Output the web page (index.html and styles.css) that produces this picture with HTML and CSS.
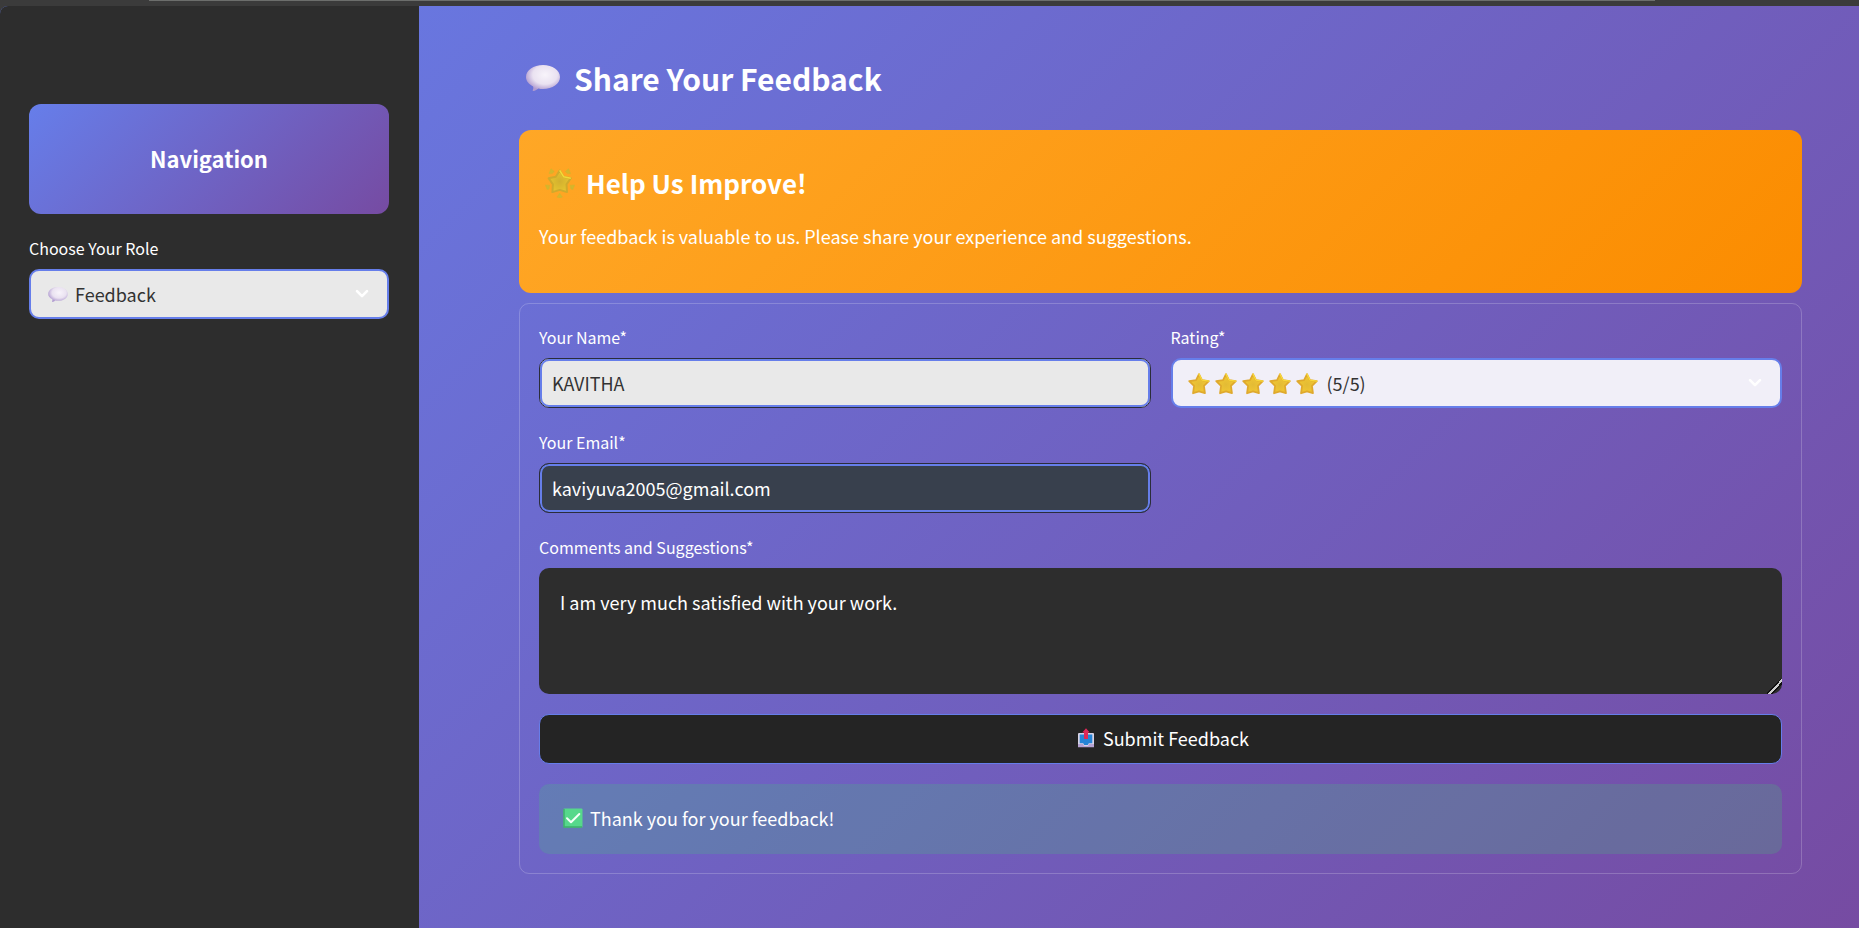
FILE: index.html
```html
<!DOCTYPE html>
<html lang="en">
<head>
<meta charset="utf-8">
<meta name="viewport" content="width=device-width, initial-scale=1">
<title>Share Your Feedback</title>
<link rel="stylesheet" href="styles.css">
</head>
<body>
<svg class="defs" aria-hidden="true">
  <defs>
    <radialGradient id="bubbleFill" cx="56%" cy="38%" r="60%">
      <stop offset="0" stop-color="#f8f4fb"/><stop offset=".6" stop-color="#eae2f1"/><stop offset="1" stop-color="#b09bd0"/>
    </radialGradient>
    <radialGradient id="starFill" cx="50%" cy="55%" r="60%">
      <stop offset="0" stop-color="#e3bb35"/><stop offset=".6" stop-color="#eec433"/><stop offset="1" stop-color="#e0a52e"/>
    </radialGradient>
    <radialGradient id="glowFill" cx="50%" cy="50%" r="60%">
      <stop offset="0" stop-color="#d3b02f"/><stop offset="1" stop-color="#e8c82f"/>
    </radialGradient>
    <symbol id="bubble" viewBox="0 0 34 26">
      <path d="M17 0C26.500 0 34 5.300 34 12S26.500 24 17 24c-1.700 0-3.200-.1-4.600-.5-1.300 1.200-3 2.200-5.300 2.500-.6-.2-.5-.8-.2-1.300.5-1 .5-2.200.2-3.300C2.700 19.200 0 16 0 12 0 5.300 7.500 0 17 0z" fill="url(#bubbleFill)"/>
    </symbol>
    <symbol id="star" viewBox="0 0 20 20">
      <path d="M10 1l2.700 5.400 6.200.9-4.400 4.400.9 6.700-5.400-1.700-5.400 1.700.9-6.700L1.100 7.300l6.200-.9z" fill="url(#starFill)" stroke="#dfa92d" stroke-width="1.600" stroke-linejoin="round"/>
      <path d="M10 1l2.700 5.400 6.200.9" fill="none" stroke="#f8da3c" stroke-width="1.200" stroke-linecap="round" stroke-linejoin="round"/>
    </symbol>
    <symbol id="glow" viewBox="0 0 30 30">
      <path d="M14.700 2.500l3.900 6.200 7.200 1.500-4.300 6.100.5 7.800-7.300-2.200-7.300 2.200.5-7.800-4.300-6.100 7.200-1.500z" fill="url(#glowFill)" stroke="#cfaa2c" stroke-width="2" stroke-linejoin="round"/>
      <path d="M14.700 2.300l3.900 6.400 7.200 1.500" fill="none" stroke="#f2da38" stroke-width="1.600" stroke-linejoin="round"/>
      <path d="M6 .8l3.200 2.600-2 2.200-3.200 0zM23.500.8l-3.200 2.600 2 2.200 3.200 0zM.4 17l4.200.4-.6 3.600-1.800.4zM29.600 17l-4.600.4 1 3.600 1.800.4zM14.700 25.200l2.600 3.900-2.600.8-2.600-.8z" fill="#d4b62c" stroke="#d4b62c" stroke-width=".6" stroke-linejoin="round"/>
    </symbol>
    <symbol id="outbox" viewBox="0 0 18 20">
      <path d="M2 5h14a1 1 0 0 1 1 1v13H1V6a1 1 0 0 1 1-1z" fill="#d9d3e6"/>
      <path d="M1 16h5l1 2h4l1-2h5v3.300H1z" fill="#b6a3d3"/>
      <path d="M2.700 6.500h12.600v8.700h-3.500l-1 1.800H7.200l-1-1.800H2.700z" fill="#2684d6"/>
      <path d="M9 .3l3.700 4.200H11V11H7V4.500H5.300z" fill="#df2857"/>
    </symbol>
    <symbol id="check" viewBox="0 0 20 20">
      <rect x=".5" y=".5" width="19" height="19" rx="1" fill="#56d88b"/>
      <path d="M1 1v18h18" fill="none" stroke="#3eae6c" stroke-width="1.400"/>
      <path d="M4 10.300l4 4 8.300-8.300" fill="none" stroke="#f4fff8" stroke-width="2" stroke-linecap="round" stroke-linejoin="round"/>
    </symbol>
    <symbol id="chevron" viewBox="0 0 14 10">
      <path d="M2 2.200l5 5 5-5" fill="none" stroke="#fff" stroke-width="2.600" stroke-linecap="round" stroke-linejoin="round"/>
    </symbol>
  </defs>
</svg>
<div class="window-edge"></div>
<div class="app">
  <aside class="sidebar">
    <div class="nav-card"><h2 class="nav-title">Navigation</h2></div>
    <div class="field">
      <label class="label" for="role">Choose Your Role</label>
      <div class="select-wrap">
        <select class="control select select-role" id="role"><option>Feedback</option></select>
        <svg class="role-icon"><use href="#bubble"/></svg>
        <svg class="chevron"><use href="#chevron"/></svg>
      </div>
    </div>
  </aside>
  <main class="main">
    <h1 class="title"><svg class="title-icon"><use href="#bubble"/></svg>Share Your Feedback</h1>
    <section class="banner">
      <h2 class="banner-title"><svg class="banner-icon"><use href="#glow"/></svg>Help Us Improve!</h2>
      <p class="banner-text">Your feedback is valuable to us. Please share your experience and suggestions.</p>
    </section>
    <form class="form">
      <div class="columns">
        <div class="column">
          <div class="field">
            <label class="label" for="name">Your Name*</label>
            <input class="control input" id="name" type="text" value="KAVITHA">
          </div>
          <div class="field">
            <label class="label" for="email">Your Email*</label>
            <input class="control input input-filled" id="email" type="email" value="kaviyuva2005@gmail.com">
          </div>
        </div>
        <div class="column">
          <div class="field">
            <label class="label" for="rating">Rating*</label>
            <div class="select-wrap">
              <select class="control select select-rating" id="rating"><option>(5/5)</option></select>
              <span class="stars">
                <svg class="star"><use href="#star"/></svg><svg class="star"><use href="#star"/></svg><svg class="star"><use href="#star"/></svg><svg class="star"><use href="#star"/></svg><svg class="star"><use href="#star"/></svg>
              </span>
              <svg class="chevron"><use href="#chevron"/></svg>
            </div>
          </div>
        </div>
      </div>
      <div class="field">
        <label class="label" for="comments">Comments and Suggestions*</label>
        <textarea class="textarea" id="comments">I am very much satisfied with your work.</textarea>
      </div>
      <button class="submit" type="button"><svg class="icon"><use href="#outbox"/></svg>Submit Feedback</button>
      <div class="alert" role="status"><svg class="icon"><use href="#check"/></svg>Thank you for your feedback!</div>
    </form>
  </main>
</div>
</body>
</html>
```

FILE: styles.css
```css
* { box-sizing: border-box; }

body {
  margin: 0;
  min-height: 100vh;
  display: flex;
  flex-direction: column;
  background: #3b3b3b;
  color: #fff;
  font: 18px/30px "Noto Sans CJK SC", "Noto Sans", sans-serif;
}

.defs { position: absolute; width: 0; height: 0; }

.window-edge { height: 6px; padding: 0 11% 0 8%; }
.window-edge::before { content: ""; display: block; height: 1px; background: #6c6e6c; }

.app {
  flex: 1;
  display: flex;
  border-top-left-radius: 8px;
  overflow: hidden;
  background: linear-gradient(135deg, #667eea 0%, #764ba2 100%);
}

.sidebar {
  flex: none;
  width: 419px;
  padding: 98px 30px 30px 29px;
  display: flex;
  flex-direction: column;
  gap: 20px;
  background: #2d2d2d;
}

.nav-card {
  padding: 39px 20px 41px;
  border-radius: 12px;
  background: linear-gradient(135deg, #667eea 0%, #764ba2 100%);
  text-align: center;
}
.nav-title { margin: 0; font-size: 22px; line-height: 30px; font-weight: 700; }

.field { display: flex; flex-direction: column; gap: 7px; }
.label { font-size: 16px; line-height: 28px; }

.control {
  display: block;
  width: 100%;
  height: 50px;
  margin: 0;
  border-radius: 10px;
  font: inherit;
  color: #333;
  outline: none;
}

.input {
  padding: 0 12px 1px;
  border: 1px solid #2b2d3a;
  background: #e9e9e9;
  box-shadow: inset 0 0 0 2px #667eea;
}
.input-filled { background: #38404d; color: #fff; }

.select-wrap { position: relative; }
.select { appearance: none; border: 2px solid #667eea; }
.select-role { padding: 0 40px 0 44px; background: #e9e9e9; }
.select-rating { padding: 0 40px 0 154px; background: #f1eff8; }

.role-icon { position: absolute; left: 19px; top: 18px; width: 20px; height: 15px; pointer-events: none; }
.stars { position: absolute; left: 17px; top: 15px; display: flex; gap: 5px; pointer-events: none; }
.star { flex: none; width: 22px; height: 22px; }
.chevron { position: absolute; right: 20px; top: 20px; width: 14px; height: 10px; pointer-events: none; }
.icon { flex: none; width: 20px; height: 20px; }

.main { flex: 1; min-width: 0; padding: 47px 57px 54px 100px; }

.title {
  display: flex;
  align-items: center;
  gap: 14px;
  margin: 0 0 27px;
  padding-left: 7px;
  font-size: 30px;
  line-height: 50px;
  font-weight: 700;
}
.title-icon { width: 34px; height: 26px; }

.banner {
  margin-bottom: 10px;
  padding: 33px 20px 42px;
  border-radius: 12px;
  background: linear-gradient(135deg, #ffa726 0%, #fb8c00 100%);
}
.banner-title {
  display: flex;
  align-items: center;
  gap: 11px;
  margin: 0 0 18px;
  padding-left: 6px;
  font-size: 26px;
  line-height: 40px;
  font-weight: 700;
}
.banner-icon { width: 30px; height: 30px; }
.banner-text { margin: 0; }

.form {
  display: flex;
  flex-direction: column;
  gap: 20px;
  padding: 19px;
  border: 1px solid rgba(255, 255, 255, 0.2);
  border-radius: 10px;
}
.columns { display: grid; grid-template-columns: 1fr 1fr; gap: 20px; }
.column { display: flex; flex-direction: column; gap: 20px; }

.textarea {
  display: block;
  width: 100%;
  height: 126px;
  margin: 0;
  padding: 19px 21px;
  border: 0;
  border-radius: 10px;
  background: #2d2d2d;
  color: #fff;
  font: inherit;
  resize: vertical;
  outline: none;
}
.textarea::-webkit-resizer {
  background: linear-gradient(135deg, transparent 44%, #111 44% 50%, #ccc 50% 60%, #111 60% 68%, transparent 68%);
}

.submit {
  display: flex;
  align-items: center;
  justify-content: center;
  gap: 7px;
  height: 50px;
  padding: 0 0 2px 4px;
  border: 1px solid #667eea;
  border-radius: 10px;
  background: #242424;
  color: #fff;
  font: inherit;
}

.alert {
  display: flex;
  align-items: center;
  gap: 7px;
  padding: 19px 24px 21px;
  border-radius: 10px;
  background: rgba(61, 213, 109, 0.2);
}
```
